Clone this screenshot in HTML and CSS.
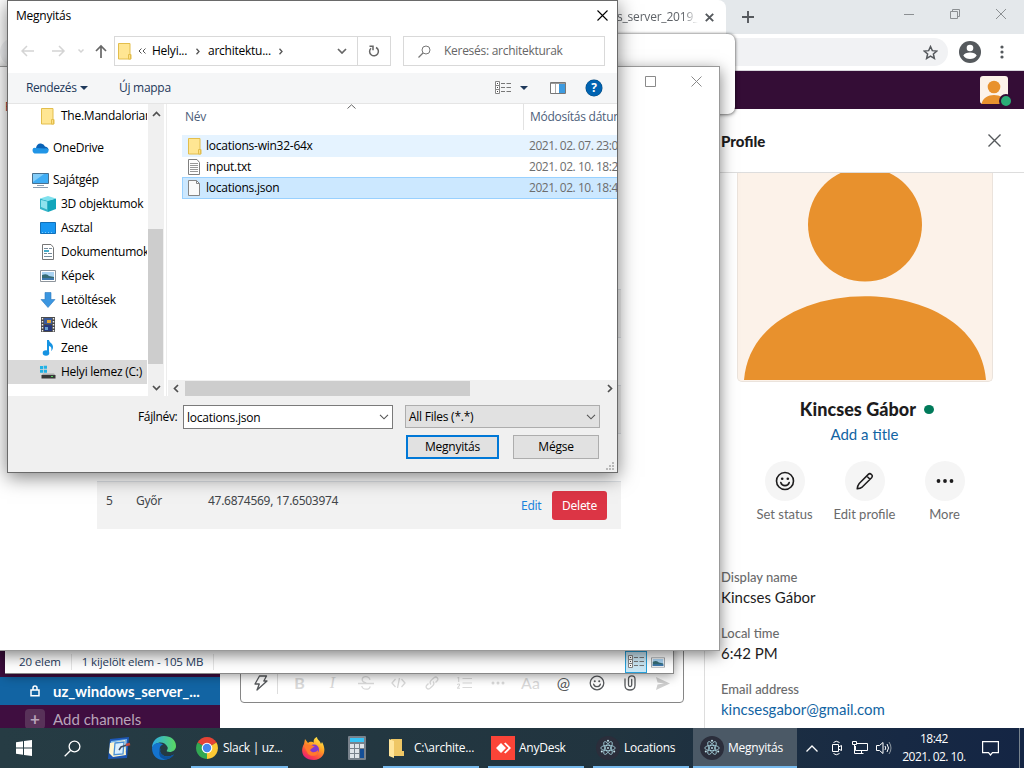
FILE: index.html
```html
<!DOCTYPE html>
<html lang="hu">
<head>
<meta charset="utf-8">
<title>Megnyitás</title>
<link rel="stylesheet" href="styles.css">
</head>
<body>
<svg width="0" height="0" class="defs">
  <defs>
    <symbol id="folder" viewBox="0 0 14 17"><path d="M.5.5h11.5v11h1v4.500H.5z" fill="#ffe693" stroke="#e3be4c"/><path d="M10.500 11.500h2v4.500h-2z" fill="#ffe086" stroke="#e3be4c"/></symbol>
    <symbol id="face" viewBox="0 0 20 20"><g fill="none" stroke="currentColor" stroke-width="1.600"><circle cx="10" cy="10" r="8.500"/><path d="M5.800 11.500c1.300 4.200 7.100 4.200 8.400 0" stroke-linecap="round"/></g><circle cx="7.200" cy="7.800" r="1.300" fill="currentColor"/><circle cx="12.800" cy="7.800" r="1.300" fill="currentColor"/></symbol>
    <symbol id="view" viewBox="0 0 16 14"><g fill="#fff" stroke="#858585"><path d="M.5.5h4v4h-4zM.5 4.500h4v4h-4zM.5 8.500h4v4h-4z"/></g><path d="M2 2h1v1H2zM2 6h1v1H2zM2 10h1v1H2z" fill="#444"/><path d="M6 2.500h4M11.500 2.500H16M6 6.500h4M11.500 6.500H16M6 10.500h4M11.500 10.500H16" stroke="#777"/></symbol>
    <symbol id="picture" viewBox="0 0 16 12"><path d="M.5.500h15v11H.5z" fill="#fff" stroke="#8e959c"/><path d="M2 2h12v8H2z" fill="#a9d3f3"/><path d="M2 5q5-2 7 1l5 1v3H2z" fill="#356b74"/><path d="M2 8l12 0v2H2z" fill="#3d78ae"/></symbol>
    <symbol id="electron" viewBox="0 0 24 24"><circle cx="12" cy="12" r="12" fill="#2b2e3b"/><g fill="none" stroke="#a9d4df" stroke-width=".8"><ellipse cx="12" cy="12" rx="7.200" ry="2.700"/><ellipse cx="12" cy="12" rx="7.200" ry="2.700" transform="rotate(60 12 12)"/><ellipse cx="12" cy="12" rx="7.200" ry="2.700" transform="rotate(120 12 12)"/></g><g fill="#c4e6ed"><circle cx="12" cy="12" r=".9"/><circle cx="5.800" cy="15.500" r="1"/><circle cx="18.200" cy="15.500" r="1"/><circle cx="12" cy="4.800" r="1"/></g></symbol>
  </defs>
</svg>
<div class="desktop">

  <section class="chrome">
    <div class="tabstrip">
      <div class="tab"><span class="tab-title">s_server_2019_u</span><svg width="9" height="9" viewBox="0 0 9 9"><path d="M.8.8l7.400 7.400M8.200.8L.8 8.200" stroke="#55595d" stroke-width="1.900"/></svg></div>
      <svg class="plus" width="12" height="12" viewBox="0 0 12 12"><path d="M6 0v12M0 6h12" stroke="#55595d" stroke-width="1.900"/></svg>
      <div class="win-buttons">
        <svg width="10" height="10"><path d="M0 5.500h10" stroke="#8b8f92"/></svg>
        <svg width="10" height="10" viewBox="0 0 10 10"><path d="M.5 2.500h7v7h-7zM2.500 2.500v-2h7v7h-2" fill="none" stroke="#8b8f92"/></svg>
        <svg width="10" height="10" viewBox="0 0 10 10"><path d="M0 0l10 10M10 0L0 10" stroke="#8b8f92"/></svg>
      </div>
    </div>
    <div class="toolbar">
      <div class="omnibox"><svg width="15" height="15" viewBox="0 0 24 24"><path d="M12 2.500l2.900 6.500 7.100.7-5.400 4.700 1.600 7L12 17.700l-6.200 3.700 1.600-7L2 9.700l7.100-.7z" fill="none" stroke="#55595d" stroke-width="2.400"/></svg></div>
      <svg width="22" height="22" viewBox="0 0 22 22"><circle cx="11" cy="11" r="11" fill="#55595d"/><circle cx="11" cy="7" r="3.300" fill="#fff"/><path d="M4.300 14.500c1.500-4 11.900-4 13.400 0-2.600 4.700-10.800 4.700-13.400 0z" fill="#fff"/></svg>
      <svg class="dots" width="4" height="14"><circle cx="2" cy="2" r="1.600"/><circle cx="2" cy="7" r="1.600"/><circle cx="2" cy="12" r="1.600"/></svg>
    </div>
    <div class="slack-top"><div class="avatar-small"><svg width="28" height="28" viewBox="0 0 28 28"><rect width="28" height="28" rx="3" fill="#fcf2e9"/><circle cx="14" cy="11" r="6.300" fill="#e8912d"/><path d="M1.500 28c2-12 23-12 25 0z" fill="#e8912d"/></svg><i class="presence"></i></div></div>
    <div class="slack-main">
      <aside class="sidebar">
        <div class="channel current"><span class="ch-icon"><svg width="10" height="12" viewBox="0 0 10 12"><path d="M1 5h8v5.800H1zM3 5V3a2 2 0 014 0v2" fill="none" stroke="#fff" stroke-width="1.500"/></svg></span><b>uz_windows_server_...</b></div>
        <div class="channel add"><span class="ch-icon box">+</span><span>Add channels</span></div>
      </aside>
      <div class="messages">
        <div class="composer">
          <svg class="dark" width="14" height="16" viewBox="0 0 14 16"><path d="M5.500 1h7L9.800 6H13L3 15l2.300-6H1z" fill="none" stroke="currentColor" stroke-width="1.300" stroke-linejoin="round"/></svg>
          <i class="rule"></i><b>B</b><em>I</em>
          <svg width="16" height="14" viewBox="0 0 16 14"><path d="M0 7.500h16M12 3.800C11-.5 4-.2 4.200 3.500c0 2 2 3 4 3.500M3.800 10c.7 4.300 8.700 4 8.200.3" fill="none" stroke="currentColor" stroke-width="1.300"/></svg>
          <svg width="15" height="10" viewBox="0 0 15 10"><path d="M4.500 1L1 5l3.500 4M10.500 1L14 5l-3.500 4M8.500 0l-2 10" fill="none" stroke="currentColor" stroke-width="1.300"/></svg>
          <svg width="14" height="14" viewBox="0 0 14 14"><path d="M6 8.500c-2-2-.5-3.500.5-4.500L9 1.800c2.500-2 5 .7 3.200 3L10.500 6.500M8 5.500c2 2 .5 3.500-.5 4.500L5 12.200c-2.500 2-5-.7-3.200-3L3.500 7.500" fill="none" stroke="currentColor" stroke-width="1.300"/></svg>
          <svg width="15" height="12" viewBox="0 0 15 12"><path d="M5.500 1.500H15M5.500 6H15M5.500 10.500H15M.5 1l1.200-.7V5M0 7.500q3-1.300 2.500.8L.3 11.300H3" fill="none" stroke="currentColor" stroke-width="1.100"/></svg>
          <svg width="14" height="4" fill="currentColor"><circle cx="2" cy="2" r="1.500"/><circle cx="7" cy="2" r="1.500"/><circle cx="12" cy="2" r="1.500"/></svg>
          <span class="aa">Aa</span><span class="at dark">@</span>
          <svg class="dark" width="16" height="16"><use href="#face"/></svg>
          <svg class="dark clip" width="12" height="16" viewBox="0 0 12 16"><path d="M1 4v6.500c0 6 10 6 10 0V4c0-4.300-6.500-4.300-6.500 0v6c0 2 3.200 2 3.200 0V4.500" fill="none" stroke="currentColor" stroke-width="1.300" stroke-linecap="round"/></svg>
          <svg width="14" height="13" viewBox="0 0 14 13"><path d="M0 0l14 6.500L0 13l1.500-5.500L8 6.500 1.500 5.500z" fill="#cfcfcf"/></svg>
        </div>
      </div>
      <aside class="profile">
        <header><h2>Profile</h2><svg width="13" height="13" viewBox="0 0 13 13"><path d="M.5.500l12 12M12.500.500l-12 12" stroke="#55585b" stroke-width="1.400"/></svg></header>
        <div class="photo"><svg width="254" height="207" viewBox="0 0 254 207"><circle cx="127" cy="51.500" r="57" fill="#e8912d"/><path d="M6 207.500C14 95 240 95 248 207.500z" fill="#e8912d"/></svg></div>
        <div class="name">Kincses Gábor<i></i></div>
        <a class="job">Add a title</a>
        <div class="actions">
          <div><span class="round"><svg width="20" height="20"><use href="#face"/></svg></span>Set status</div>
          <div><span class="round"><svg width="18" height="18" viewBox="0 0 18 18"><path d="M1.200 16.800c.3-2.300 1-4 2-5.300L12.300 2.400c2-2 5.300 1 3.300 3.300L6.500 14.800c-1.300 1-3 1.700-5.300 2zM10.700 4l3.300 3.300" fill="none" stroke="currentColor" stroke-width="1.500" stroke-linejoin="round"/></svg></span>Edit profile</div>
          <div><span class="round"><svg width="18" height="4" fill="currentColor"><circle cx="2.500" cy="2" r="1.900"/><circle cx="9" cy="2" r="1.900"/><circle cx="15.500" cy="2" r="1.900"/></svg></span>More</div>
        </div>
        <dl><dt>Display name</dt><dd>Kincses Gábor</dd><dt>Local time</dt><dd class="time">6:42 PM</dd><dt>Email address</dt><dd class="mail">kincsesgabor@gmail.com</dd></dl>
      </aside>
    </div>
  </section>

  <div class="hovercard"></div>

  <section class="explorer">
    <span class="count">20 elem</span><span class="chosen">1 kijelölt elem - 105 MB</span>
    <span class="mode on"><svg width="16" height="14"><use href="#view"/></svg></span>
    <span class="mode"><svg width="14" height="11" viewBox="0 0 16 12"><use href="#picture"/></svg></span>
  </section>

  <section class="locations">
    <div class="loc-title">
      <svg width="11" height="11" viewBox="0 0 11 11"><path d="M.5.500h10v10H.5z" fill="none" stroke="#8a8a8a"/></svg>
      <svg width="11" height="11" viewBox="0 0 11 11"><path d="M.5.500l10 10M10.500.500l-10 10" stroke="#8a8a8a"/></svg>
    </div>
    <div class="loc-menu">File</div>
    <div class="loc-table">
      <div class="loc-row"></div><div class="loc-row"></div><div class="loc-row"></div><div class="loc-row"></div>
      <div class="loc-row"><span class="num">5</span><span class="city">Győr</span><span class="coord">47.6874569, 17.6503974</span><span class="edit">Edit</span><span class="delete">Delete</span></div>
    </div>
  </section>

  <section class="dialog">
    <div class="d-title"><span>Megnyitás</span><svg width="11" height="11" viewBox="0 0 11 11"><path d="M.5.500l10 10M10.500.500l-10 10" stroke="#000" stroke-width="1.100"/></svg></div>
    <div class="d-address">
      <svg class="nav" width="82" height="14" viewBox="0 0 82 14"><g fill="none"><path d="M1 7h12M6 2L1 7l5 5M31 7h12M38 2l5 5-5 5M57.500 5.500L60 8l2.500-2.500" stroke="#d4d4d4" stroke-width="1.500"/></g></svg>
      <svg class="up" width="12" height="14" viewBox="0 0 12 14"><path d="M6 14V2M1 7l5-5 5 5" fill="none" stroke="#686868" stroke-width="1.700"/></svg>
      <div class="path"><svg width="14" height="17"><use href="#folder"/></svg>
        <svg class="back2" width="8" height="6" viewBox="0 0 8 6"><path d="M3.500.500L1 3l2.500 2.500M7.500.500L5 3l2.500 2.500" fill="none" stroke="#555"/></svg>
        <span class="p1">Helyi...</span><svg class="chev" width="4" height="7" viewBox="0 0 4 7"><path d="M.5.800L3 3.500.5 6.200" fill="none" stroke="#555" stroke-width="1.300"/></svg>
        <span class="p2">architektu...</span><svg class="chev" width="4" height="7" viewBox="0 0 4 7"><path d="M.5.800L3 3.500.5 6.200" fill="none" stroke="#555" stroke-width="1.300"/></svg>
        <svg class="drop" width="10" height="6" viewBox="0 0 10 6"><path d="M1 1l4 4 4-4" fill="none" stroke="#666" stroke-width="1.700"/></svg>
      </div>
      <div class="reload"><svg width="12" height="12" viewBox="0 0 12 12"><path d="M8 2.500A4.400 4.400 0 113 3.200" fill="none" stroke="#666" stroke-width="1.500"/><path d="M1.500 1.300H5v4" fill="none" stroke="#666" stroke-width="1.500"/></svg></div>
      <div class="search"><svg width="13" height="13" viewBox="0 0 13 13"><circle cx="8" cy="5" r="4" fill="none" stroke="#777"/><path d="M5 8L.5 12.500" stroke="#777" stroke-width="1.200"/></svg><span>Keresés: architekturak</span></div>
    </div>
    <div class="d-tools">
      <span class="organize">Rendezés</span><i class="tri"></i><span class="newdir">Új mappa</span>
      <svg class="view" width="16" height="14"><use href="#view"/></svg><i class="tri t2"></i>
      <svg class="pane" width="16" height="12" viewBox="0 0 16 12"><path d="M.5.500h15v11H.5z" fill="#fff" stroke="#777"/><path d="M1 1.500h14" stroke="#999"/><path d="M5.500 2v9" stroke="#aaa"/><path d="M9 2h6v9H9z" fill="#3d9be0"/></svg>
      <span class="help">?</span>
    </div>
    <div class="d-body">
      <nav class="tree">
        <div class="sub first"><svg width="14" height="17"><use href="#folder"/></svg><span>The.Mandalorian</span></div>
        <div class="top"><svg width="17" height="11" viewBox="0 0 17 11"><path d="M4 5Q5 0 9 .5q3 .3 4 3Q16.500 4 16.500 7L13 9 1 7Q1 4.500 4 5z" fill="#0a62b6"/><path d="M4 5Q2 4 .7 6 0 9 2.500 10.500H14q3-1 2.500-4Q15 4.500 12.500 5.500z" fill="#2195e6"/></svg><span>OneDrive</span></div>
        <div class="top pc"><svg width="17" height="16" viewBox="0 0 17 16"><path d="M.5 1.500h16v10H.5z" fill="#3fadf5" stroke="#48708f"/><path d="M1 10L12 2H1z" fill="#83cdf9"/><path d="M5 13.500h7M1 15.500h15" stroke="#8a9db0"/></svg><span>Sajátgép</span></div>
        <div class="sub"><svg width="16" height="16" viewBox="0 0 16 16"><path d="M0 2.500l8 2V16l-8-3z" fill="#35b4c8"/><path d="M8 4.500l8-2V13l-8 3z" fill="#12a5bb"/><path d="M0 2.500L8 0l8 2.500-8 2.500z" fill="#80e1ee"/><path d="M1 4l6 1.500v8L1 11z" fill="#8fe3ee"/></svg><span>3D objektumok</span></div>
        <div class="sub"><svg width="16" height="12" viewBox="0 0 16 12"><path d="M.5.500h15v11H.5z" fill="#1897f2" stroke="#1270b8"/><path d="M2 10.500h10" stroke="#75c6fb" stroke-dasharray="1 2"/></svg><span>Asztal</span></div>
        <div class="sub"><svg width="14" height="16" viewBox="0 0 14 16"><path d="M1.500.500h8.500l2.500 3v12h-11z" fill="#fff" stroke="#777"/><path d="M3 4.500h4M8 4.500h3M3 9.500h3M7 9.500h4M3 12.500h8" stroke="#788c9b"/><path d="M3 6h5v2H3z" fill="#43abc9"/></svg><span>Dokumentumok</span></div>
        <div class="sub"><svg width="16" height="12"><use href="#picture"/></svg><span>Képek</span></div>
        <div class="sub"><svg width="16" height="16" viewBox="0 0 16 16"><path d="M5 .500h6v7h4L8 15.500l-7-8h4z" fill="#3b96e0" stroke="#2d79bd" stroke-width=".6"/></svg><span>Letöltések</span></div>
        <div class="sub"><svg width="14" height="15" viewBox="0 0 14 15"><path d="M0 0h14v15H0z" fill="#4b4b4b"/><path d="M3 1h8v6H3z" fill="#3a5a9a"/><path d="M3 8h8v6H3z" fill="#25397c"/><path d="M6 3h4v3H6z" fill="#e2a634"/><path d="M4 10h3v3H4z" fill="#69a0cf"/><path d="M1.500 1v14M12.500 1v14" stroke="#eee" stroke-width="1.400" stroke-dasharray="1.500 1.500"/></svg><span>Videók</span></div>
        <div class="sub"><svg width="14" height="16" viewBox="0 0 14 16"><path d="M6 0h2c.3 3 4 3 4 7 0 2-1 3.500-1.800 4C11 8 10 6.300 8 6v7H6z" fill="#1693e2"/><ellipse cx="5" cy="13" rx="3.300" ry="2.700" fill="#1693e2"/></svg><span>Zene</span></div>
        <div class="sub sel"><svg width="16" height="14" viewBox="0 0 16 14"><path d="M0 1h3v3H0zM3.700.800H7v3H3.700zM0 4.700h3v3H0zM3.700 4.700H7v3H3.700z" fill="#21b1e5"/><path d="M3 8.500h11l1.500 2H1.500z" fill="#aaa"/><path d="M1.500 10H15.500v3.500H1.500z" fill="#383838"/><path d="M11 11.500h2" stroke="#53d45c"/></svg><span>Helyi lemez (C:)</span></div>
      </nav>
      <div class="vbar"><svg width="9" height="6" viewBox="0 0 9 6"><path d="M1 5l3.500-3.500L8 5" fill="none" stroke="#505050" stroke-width="1.700"/></svg><i></i><svg width="9" height="6" viewBox="0 0 9 6"><path d="M1 1l3.500 3.500L8 1" fill="none" stroke="#505050" stroke-width="1.700"/></svg></div>
      <div class="list">
        <div class="l-head"><span>Név</span><svg width="9" height="5" viewBox="0 0 9 5"><path d="M.5 4.500l4-3.700 4 3.700" fill="none" stroke="#666"/></svg><span class="mod">Módosítás dátuma</span></div>
        <div class="file hot"><svg width="14" height="17"><use href="#folder"/></svg><span>locations-win32-64x</span><time>2021. 02. 07. 23:01</time></div>
        <div class="file"><svg width="12" height="16" viewBox="0 0 12 16"><path d="M.5.500H9l2.500 3v12H.5z" fill="#fff" stroke="#808080"/><path d="M2 4.500h8M2 6.500h8M2 8.500h8M2 10.500h8M2 12.500h8" stroke="#999"/></svg><span>input.txt</span><time>2021. 02. 10. 18:25</time></div>
        <div class="file picked"><svg width="12" height="16" viewBox="0 0 12 16"><path d="M.5.500h8l3 3v12H.5z" fill="#fafafa" stroke="#858585"/><path d="M8.500.500v3h3" fill="none" stroke="#858585"/></svg><span>locations.json</span><time>2021. 02. 10. 18:41</time></div>
        <div class="hbar"><svg width="6" height="9" viewBox="0 0 6 9"><path d="M5 1L1.500 4.500 5 8" fill="none" stroke="#505050" stroke-width="1.700"/></svg><i></i><svg width="6" height="9" viewBox="0 0 6 9"><path d="M1 1l3.500 3.500L1 8" fill="none" stroke="#505050" stroke-width="1.700"/></svg></div>
      </div>
    </div>
    <div class="d-foot">
      <div class="line"><label>Fájlnév:</label><div class="combo file-name"><span>locations.json</span><svg width="10" height="6" viewBox="0 0 10 6"><path d="M1 .800l4 4 4-4" fill="none" stroke="#555" stroke-width="1.100"/></svg></div><div class="combo kind"><span>All Files (*.*)</span><svg width="10" height="6" viewBox="0 0 10 6"><path d="M1 .800l4 4 4-4" fill="none" stroke="#555" stroke-width="1.100"/></svg></div></div>
      <div class="line buttons"><span class="btn primary">Megnyitás</span><span class="btn">Mégse</span></div>
      <svg class="grip" width="8" height="8" viewBox="0 0 8 8"><path d="M6 0h2v2H6zM3 3h2v2H3zM6 3h2v2H6zM0 6h2v2H0zM3 6h2v2H3zM6 6h2v2H6z" fill="#b9b9b9"/></svg>
    </div>
  </section>

  <footer class="taskbar">
    <span class="tb w48"><svg width="16" height="16" viewBox="0 0 16 16"><path d="M0 2.200l7-1v6.300H0zM8 1l8-1v7.500H8zM0 8.500h7v6.300l-7-1zM8 8.500h8V16l-8-1z" fill="#fff"/></svg></span>
    <span class="tb w48"><svg width="17" height="17" viewBox="0 0 17 17"><circle cx="10.500" cy="6.500" r="5.400" fill="none" stroke="#fff" stroke-width="1.300"/><path d="M6.500 10.500L.7 16.300" stroke="#fff" stroke-width="1.300"/></svg></span>
    <span class="tb w46"><svg width="24" height="23" viewBox="0 0 24 23"><path d="M3 2l19-2-2 21-19 1z" fill="#1d57b5"/><path d="M4 4l16-2-1 12-17 2z" fill="#78b7ee"/><path d="M3 6l15-3 1 15-13 2-4-4z" fill="#fff6d0"/><path d="M8 6l9-1-1 12-9 .7z" fill="#d9efff" stroke="#4a90d4" stroke-width="1.300"/><path d="M12 13l2-3 6-2" fill="none" stroke="#3d4c63" stroke-width="1.500"/><path d="M19 8l4-1" stroke="#c6473b" stroke-width="2.500"/></svg></span>
    <span class="tb w44"><svg width="24" height="24" viewBox="0 0 24 24"><defs><linearGradient id="eg"><stop stop-color="#2cabe8"/><stop offset="1" stop-color="#5ad860"/></linearGradient></defs><path d="M0 12C0 5 5 0 12 0s12 4 12 10c0 5-5 7-9 5.500-1-1 1.500-2 .5-4.500C12 4 3 6 0 12z" fill="url(#eg)"/><path d="M0 12C1 7 7 5.500 11 8.500c-3 1-4 4-3 7 2 6 9 6 14 3C16 27 0 26 0 12z" fill="#1473cd"/><path d="M8.200 15.500c2 6 9 6 13.800 3C19 23 14 25 10 22c-3-1-4-6-1-10z" fill="#0d529c"/></svg></span>
    <span class="tb app slack"><svg width="22" height="22" viewBox="0 0 22 22"><path d="M11 11L1.500 5.500A11 11 0 0120.500 5.500z" fill="#e54335"/><path d="M11 11L1.500 5.500A11 11 0 0011 22l4.700-8.300z" fill="#32a853"/><path d="M11 11l9.500-5.500A11 11 0 0111 22z" fill="#fcc934"/><path d="M11 6h9.800L20.500 5.500 11 3z" fill="#e54335"/><circle cx="11" cy="11" r="5.300" fill="#fff"/><circle cx="11" cy="11" r="4.200" fill="#4587ed"/></svg><span>Slack | uz...</span></span>
    <span class="tb w50"><svg width="23" height="23" viewBox="0 0 23 23"><defs><linearGradient id="ff" x1=".8" y1="0" x2=".2" y2="1"><stop stop-color="#fff14f"/><stop offset=".4" stop-color="#ff9f23"/><stop offset=".75" stop-color="#fb4545"/><stop offset="1" stop-color="#e31587"/></linearGradient></defs><path d="M2 7L3 2l3 4c1-1 4-2 6 0C11 4 12 1 15 0c0 3 3 3 4 7l1-2c5 8 2 18-8 18C0 23-2 14 2 7z" fill="url(#ff)"/><circle cx="12" cy="12.500" r="5" fill="#8139cf"/><path d="M2 9c4-3 8-1 11 1-3 0-3 2-5 3 2 4 7 2 8 0 1 5-5 8-10 4z" fill="#ff7a2c"/></svg></span>
    <span class="tb w38"><svg width="18" height="24" viewBox="0 0 18 24"><rect width="18" height="24" rx="1" fill="#78828c"/><path d="M2 2h14v4H2z" fill="#37c3f5"/><path d="M2 8h4v4H2zM7 8h4v4H7zM12 8h4v4h-4zM2 13h4v4H2zM7 13h4v4H7zM2 18h4v4H2zM7 18h4v4H7z" fill="#dfe4e9"/><path d="M12 13h4v9h-4z" fill="#144f97"/></svg></span>
    <span class="tb app dir"><svg width="15" height="20" viewBox="0 0 15 20"><path d="M2 1h11v12h2v5H2z" fill="#efc765"/><path d="M0 1l5 2v17l-5-2z" fill="#ffe59a"/></svg><span>C:\archite...</span></span>
    <span class="tb app any"><svg width="24" height="24" viewBox="0 0 24 24"><path d="M0 0h24v24H0z" fill="#fb4438"/><path d="M10 7l5 5-5 5-5-5zM13 7.500l1.500-1L20 12l-5.500 5.500-1.500-1 4.500-4.500z" fill="#fff"/></svg><span>AnyDesk</span></span>
    <span class="tb app loc"><svg width="24" height="24"><use href="#electron"/></svg><span>Locations</span></span>
    <span class="tb app open"><svg width="24" height="24"><use href="#electron"/></svg><span>Megnyitás</span></span>
    <div class="tray">
      <svg class="t-up" width="12" height="7" viewBox="0 0 12 7"><path d="M.5 6.500L6 1l5.500 5.500" fill="none" stroke="#fff" stroke-width="1.300"/></svg>
      <svg class="t-cam" width="12" height="16" viewBox="0 0 12 16"><path d="M1.500 4.500h6v7h-6zM7.500 7l3-1.500v5L7.500 9M2.500 2.500Q5 0 8.500 2.500M2.500 13.500Q5 16 8.500 13.500" fill="none" stroke="#fff"/></svg>
      <svg class="t-net" width="16" height="14" viewBox="0 0 16 14"><path d="M5 2.500h10.500v7H3.500V5M.5.500h4v3h-4zM2.500 3.500v9h9M9.500 9.500v3" fill="none" stroke="#fff"/></svg>
      <svg class="t-vol" width="16" height="14" viewBox="0 0 16 14"><path d="M.5 4.500h3L7 1.500v11L3.500 9.500h-3zM9 5q1.500 2 0 4M11 3q3 4 0 8" fill="none" stroke="#fff"/><path d="M13 1q4 6 0 12" fill="none" stroke="#8e98a1"/></svg>
      <div class="clock"><span>18:42</span><span>2021. 02. 10.</span></div>
      <svg class="t-msg" width="17" height="17" viewBox="0 0 17 17"><path d="M.6 1.600h15.800v11H10.500L8.500 15l-2-2.400H.6z" fill="none" stroke="#fff" stroke-width="1.200"/></svg>
    </div>
  </footer>
</div>
</body>
</html>
```
FILE: styles.css
```css
* { box-sizing: border-box; }
body { margin: 0; font: 12px/16px "Open Sans", "Noto Sans", sans-serif; letter-spacing: -0.25px; color: #000; }
svg { display: block; flex: none; }
span { white-space: nowrap; }
.defs { position: absolute; }
.desktop { position: relative; width: 1024px; height: 768px; overflow: hidden; background: #fff; }

/* browser */
.chrome { position: absolute; left: 0; top: 0; width: 1024px; height: 728px; display: flex; flex-direction: column; background: #fff; }
.tabstrip { height: 34px; flex: none; background: #e4e8eb; display: flex; align-items: center; }
.tab { width: 726px; height: 34px; background: #fff; border-radius: 0 8px 0 0; display: flex; align-items: center; justify-content: flex-end; padding-right: 12px; }
.tab-title { width: 88px; color: #5f6368; letter-spacing: -.2px; -webkit-mask-image: linear-gradient(90deg, #000 75%, transparent 92%); mask-image: linear-gradient(90deg, #000 75%, transparent 92%); }
.plus { margin-left: 16px; }
.win-buttons { margin-left: auto; display: flex; gap: 36px; padding-right: 18px; padding-bottom: 6px; }
.toolbar { height: 37px; flex: none; border-bottom: 1px solid #d8d5dc; display: flex; align-items: center; }
.omnibox { width: 948px; height: 28px; border-radius: 14px; background: #f1f2f4; display: flex; align-items: center; justify-content: flex-end; padding-right: 10px; margin-right: 11px; }
.dots { margin-left: 19px; fill: #55595d; }
.slack-top { height: 38px; flex: none; background: #340d36; display: flex; align-items: center; justify-content: flex-end; padding-right: 16px; }
.avatar-small { position: relative; }
.presence { position: absolute; right: -5px; bottom: -4px; width: 14px; height: 14px; border-radius: 50%; background: #2bac76; border: 2px solid #340d36; }
.slack-main { flex: 1; display: flex; min-height: 0; font-family: Lato, sans-serif; letter-spacing: 0; }
.sidebar { width: 220px; background: #3f0e40; display: flex; flex-direction: column; justify-content: flex-end; overflow: hidden; }
.channel { height: 28px; flex: none; display: flex; align-items: center; font-size: 15px; color: #b8a4b9; }
.channel.current { background: #1264a3; color: #fff; letter-spacing: -.08px; }
.channel.add { height: 23px; padding-top: 4px; }
.ch-icon { width: 20px; height: 20px; margin: 0 8px 0 25px; display: flex; align-items: center; justify-content: center; }
.ch-icon.box { background: #583259; border-radius: 4px; font-weight: bold; font-size: 17px; }
.messages { width: 484px; display: flex; align-items: flex-end; padding: 0 20px 25px; }
.composer { width: 444px; height: 60px; border: 1px solid #868686; border-radius: 4px; display: grid; grid-template-columns: 32px 6px repeat(12, 33px); grid-template-rows: 28px; align-content: end; align-items: center; justify-items: center; padding: 0 0 5px 4px; color: #d9d9d9; font-size: 16px; }
.composer em { font-family: "Liberation Serif", serif; }
.rule { width: 1px; height: 22px; background: #ddd; justify-self: start; }
.composer .dark { color: #55585b; }
.profile { width: 320px; border-left: 1px solid #ddd; display: flex; flex-direction: column; color: #1d1c1d; }
.profile header { height: 64px; flex: none; border-bottom: 1px solid #ddd; display: flex; align-items: center; justify-content: space-between; padding: 0 23px 0 16px; }
.profile h2 { margin: 0; font-size: 15px; font-weight: 900; }
.photo { width: 256px; height: 209px; margin-left: 32px; border: 1px solid #ebe3dc; border-top: 0; border-radius: 0 0 5px 5px; background: #fcf2e9; overflow: hidden; flex: none; }
.name { margin-top: 15px; font-size: 18px; line-height: 24px; font-weight: 900; display: flex; justify-content: center; align-items: center; gap: 8px; padding-left: 5px; letter-spacing: .05px; }
.name i { width: 10px; height: 9px; border-radius: 50%; background: #007a5a; }
.job { text-align: center; font-size: 15px; line-height: 22px; margin-top: 2px; color: #1264a3; }
.actions { display: flex; justify-content: center; margin-top: 16px; font-size: 13px; color: #6a6a6b; line-height: 18px; }
.actions div { width: 80px; display: flex; flex-direction: column; align-items: center; gap: 4px; }
.round { width: 40px; height: 40px; border-radius: 50%; background: #f5f5f5; display: flex; align-items: center; justify-content: center; color: #1d1c1d; }
dl { margin: 44px 0 0 16px; font-size: 15px; line-height: 20px; }
dt { font-size: 13px; font-weight: 500; color: #6b6b6c; }
dd { margin: 0 0 16px; }
.mail { color: #1264a3; }

.hovercard { position: absolute; left: 400px; top: 34px; width: 335px; height: 80px; background: #fff; border-radius: 7px; box-shadow: 0 0 3px rgba(0,0,0,.55), 0 1px 4px rgba(0,0,0,.35); }

/* file manager status bar */
.explorer { position: absolute; left: 5px; top: 600px; width: 669px; height: 74px; padding: 51px 4px 0 14px; background: #fff; border: solid #888; border-width: 0 1px 1px 0; box-shadow: 0 2px 10px rgba(0,0,0,.4); display: flex; align-items: center; color: #1e3a5c; font-size: 11.500px; letter-spacing: -.12px; }
.chosen { margin-left: 10px; padding-left: 10px; border-left: 1px solid #e5e5e5; padding-right: 10px; border-right: 1px solid #e5e5e5; }
.mode { width: 22px; height: 22px; display: flex; align-items: center; justify-content: center; }
.mode.on { margin-left: auto; background: #cbe8f6; border: 1px solid #26a0da; }

/* locations app */
.locations { position: absolute; left: -5px; top: 66px; width: 725px; height: 585px; background: #fff; border: 1px solid #999; box-shadow: 0 4px 14px rgba(0,0,0,.5); display: flex; flex-direction: column; }
.loc-title { height: 28px; display: flex; align-items: center; justify-content: flex-end; gap: 35px; padding-right: 17px; }
.loc-menu { padding: 4px 9px 3px; color: #8b2b2b; }
.loc-table { width: 524px; margin: 171px 0 0 101px; font-family: "Noto Sans", sans-serif; font-size: 12px; color: #42464a; letter-spacing: -.28px; }
.loc-row { height: 48px; border-top: 1px solid #dee2e6; display: flex; padding: 11px 14px 0 9px; }
.loc-row:nth-child(odd) { background: #f2f2f2; }
.num { width: 30px; }
.city { width: 72px; }
.coord { width: 313px; }
.edit { color: #1d83dc; margin-top: 5px; width: 31px; }
.delete { width: 55px; height: 29px; margin-top: -2px; background: #dc3545; color: #fff; border-radius: 3px; display: flex; align-items: center; justify-content: center; flex: none; }

/* open dialog */
.dialog { position: absolute; left: 7px; top: 0; width: 611px; height: 473px; background: #fff; border: 1px solid #6a6a6a; box-shadow: 0 4px 18px rgba(0,0,0,.5); display: flex; flex-direction: column; }
.d-title { height: 30px; display: flex; align-items: center; justify-content: space-between; padding: 0 9px 0 8px; }
.d-title svg { margin-bottom: 2px; }
.d-address { height: 42px; padding-top: 5px; display: flex; align-items: flex-start; }
.nav { margin: 8px -8px 0 13px; }
.up { margin-top: 8px; }
.path { margin-left: 7px; width: 244px; height: 30px; border: 1px solid #d9d9d9; display: flex; align-items: center; padding: 0 10px 0 3px; }
.back2 { margin: 0 6px 0 6px; }
.p1 { width: 44px; flex: none; }
.p2 { width: 71px; flex: none; margin-left: 8px; }
.drop { margin-left: auto; }
.reload { width: 33px; height: 30px; border: 1px solid #d9d9d9; border-left: 0; display: flex; align-items: center; justify-content: center; }
.search { margin-left: 12px; width: 202px; height: 30px; border: 1px solid #d9d9d9; display: flex; align-items: center; padding-left: 14px; gap: 13px; color: #666; letter-spacing: -.45px; letter-spacing: -.28px; }
.d-tools { height: 31px; background: #f5f6f7; border-bottom: 1px solid #e5e5e5; display: flex; align-items: center; color: #1e395b; padding: 0 15px 0 18px; letter-spacing: -.4px; }
.organize { width: 49px; }
.tri { border: 4px solid transparent; border-top-color: #1e395b; border-bottom: 0; margin-left: 5px; }
.newdir { margin-left: 31px; letter-spacing: -.28px; }
.view { margin-left: auto; }
.t2 { margin-left: 9px; }
.pane { margin: 0 20px 0 22px; }
.help { width: 16px; height: 16px; border-radius: 50%; background: #0063b1; color: #fff; font-weight: bold; text-align: center; line-height: 16px; box-shadow: 0 0 0 .5px #004578; }
.d-body { height: 292px; display: flex; overflow: hidden; }
.tree { width: 139px; overflow: hidden; flex: none; }
.tree > div { height: 24px; display: flex; align-items: center; white-space: nowrap; }
.tree .sub { padding-left: 32px; }
.tree .sub svg { margin-right: 5px; }
.tree .sub svg[width="14"] { margin: 0 6px 0 1px; }
.tree .top { padding-left: 24px; margin-top: 8px; }
.tree .top svg { margin-right: 4px; }
.tree .sel { background: #d9d9d9; }
.vbar { width: 16px; margin-left: 1px; flex: none; background: #f0f0f0; padding: 7px 0 5px; display: flex; flex-direction: column; align-items: center; }
.vbar i { width: 15px; height: 135px; background: #cdcdcd; margin: 112px 0 auto; flex: none; align-self: flex-start; }
.list { flex: 1; margin-left: 2px; border-left: 1px solid #ededed; overflow: hidden; display: flex; flex-direction: column; }
.l-head { height: 31px; flex: none; display: flex; padding: 5px 0 0 18px; color: #4c607a; }
.l-head svg { margin: -5px 0 0 141px; }
.l-head .mod { margin: -5px 0 0 auto; width: 94px; flex: none; border-left: 1px solid #e2e2e2; height: 26px; padding: 5px 0 0 6px; }
.file { height: 21px; flex: none; margin-left: 15px; display: flex; align-items: center; padding-left: 6px; }
.file svg { margin-right: 6px; }
.file svg[width="14"] { margin-right: 4px; }
.file time { margin-left: auto; width: 88px; flex: none; white-space: nowrap; color: #6d6d6d; letter-spacing: -.48px; }
.hot { background: #e5f3ff; height: 22px; margin-bottom: -1px; }
.picked { background: #cce8ff; border: 1px solid #99d1ff; border-right: 0; height: 22px; padding-left: 5px; }
.hbar { height: 16px; margin-top: auto; margin-left: 1px; background: #f0f0f0; display: flex; align-items: center; padding: 0 4px 0 5px; }
.hbar i { width: 285px; height: 15px; background: #cdcdcd; margin: 0 auto 0 6px; }
.d-foot { flex: 1; background: #f0f0f0; position: relative; }
.line { display: flex; padding: 9px 0 0 130px; align-items: flex-start; }
.line label { width: 45px; margin-top: 4px; white-space: nowrap; letter-spacing: -.35px; }
.combo { border: 1px solid #7a7a7a; background: #fff; height: 24px; width: 210px; display: flex; align-items: center; justify-content: space-between; padding: 0 3px; }
.file-name span { padding-top: 2px; }
.combo.kind { margin-left: 12px; width: 195px; height: 23px; background: #e1e1e1; border-color: #adadad; }
.buttons { padding: 6px 0 0 398px; gap: 14px; }
.btn { height: 24px; width: 86px; background: #e1e1e1; border: 1px solid #adadad; text-align: center; line-height: 22px; }
.btn.primary { width: 93px; border: 2px solid #0078d7; line-height: 20px; }
.grip { position: absolute; right: 3px; bottom: 2px; }

/* taskbar */
.taskbar { position: absolute; left: 0; top: 728px; width: 1024px; height: 40px; display: flex; color: #fff; background: linear-gradient(90deg, #263c44, #21343f 60%, #172944 88%, #142544); }
.tb { height: 40px; display: flex; align-items: center; justify-content: center; flex: none; }
.w48 { width: 48px; }
.w46 { width: 46px; }
.w44 { width: 43px; }
.w50 { width: 50px; }
.w38 { width: 38px; margin-right: 7px; }
.app { justify-content: flex-start; border-bottom: 2px solid #76b9ed; overflow: hidden; }
.app svg { margin-top: 2px; }
.app > span { margin-top: 2px; }
.slack { width: 97px; margin-left: 6px; padding-left: 5px; gap: 5px; letter-spacing: -.3px; }
.dir { width: 96px; padding-left: 6px; gap: 10px; }
.any { width: 96px; margin-left: 9px; padding-left: 3px; gap: 4px; }
.loc { width: 96px; margin-left: 9px; padding-left: 3px; gap: 4px; }
.open { width: 104px; margin-left: 4px; padding-left: 7px; gap: 4px; background: #4b5966; }
.tray { margin-left: 9px; display: flex; align-items: center; flex: 1; border-right: 1px solid #78838d; margin-right: 4px; }
.t-cam { margin-left: 13px; }
.t-net { margin-left: 9px; }
.t-vol { margin-left: 8px; }
.clock { width: 68px; margin-left: 8px; display: flex; flex-direction: column; align-items: center; line-height: 18px; letter-spacing: -.55px; }
.t-msg { margin-left: 14px; }
```
